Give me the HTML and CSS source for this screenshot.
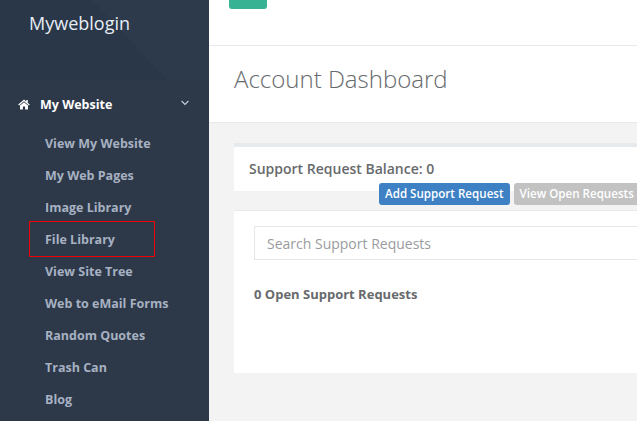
FILE: index.html
```html
<!DOCTYPE html>
<html lang="en">
<head>
<meta charset="utf-8">
<title>Account Dashboard</title>
<link rel="stylesheet" href="styles.css">
</head>
<body>
<div class="app">
  <aside class="sidebar">
    <div class="brand">
      <svg class="brand-shade" width="209" height="81" viewBox="0 0 209 81"><polygon points="0,0 92,0 168,81 0,81" fill="#2a3748"/></svg>
      <span class="brand-name">Myweblogin</span>
    </div>
    <div class="nav-head">
      <svg class="home" width="12" height="11" viewBox="0 0 12 11"><path d="M6 0.6 L0.2 5.6 L1 6.4 L6 2.2 L11 6.4 L11.8 5.6 L9.8 3.9 L9.8 1 L8.3 1 L8.3 2.6 Z M2 6.6 L2 10.6 L4.9 10.6 L4.9 7.6 L7.1 7.6 L7.1 10.6 L10 10.6 L10 6.6 L6 3.3 Z" fill="#fff"/></svg>
      <span class="nav-title">My Website</span>
      <svg class="chev" width="8" height="6" viewBox="0 0 8 6"><path d="M0.6 1 L4 4.4 L7.4 1" fill="none" stroke="#c9d0da" stroke-width="1.1"/></svg>
    </div>
    <ul class="nav-list">
      <li class="nav-item">View My Website</li>
      <li class="nav-item">My Web Pages</li>
      <li class="nav-item">Image Library</li>
      <li class="nav-item nav-marked">File Library</li>
      <li class="nav-item">View Site Tree</li>
      <li class="nav-item">Web to eMail Forms</li>
      <li class="nav-item">Random Quotes</li>
      <li class="nav-item">Trash Can</li>
      <li class="nav-item">Blog</li>
    </ul>
  </aside>
  <main class="main">
    <div class="topbar"><span class="top-btn"></span></div>
    <div class="title-bar"><h1 class="title">Account Dashboard</h1></div>
    <div class="content">
      <section class="balance">
        <h2 class="balance-text">Support Request Balance: 0</h2>
      </section>
      <div class="actions">
        <span class="btn btn-blue">Add Support Request</span>
        <span class="btn btn-grey">View Open Requests</span>
      </div>
      <section class="panel">
        <div class="search">Search Support Requests</div>
        <p class="count">0 Open Support Requests</p>
      </section>
    </div>
  </main>
</div>
</body>
</html>
```
FILE: styles.css
```css
* { box-sizing: border-box; }
html, body { margin: 0; height: 100%; overflow: hidden; }
body { font-family: "Open Sans", "Liberation Sans", sans-serif; background: #f3f3f4; }
.app { display: flex; width: 637px; height: 421px; overflow: hidden; }
.sidebar { width: 209px; flex: none; background: #2d3949; }
.brand { position: relative; height: 81px; padding: 11px 0 0 29px; background: #2c3a4b; }
.brand-shade { position: absolute; left: 0; top: 0; }
.brand-name { position: relative; display: block; font-size: 18px; font-weight: 500; line-height: 25px; color: #e6edf5; }
.nav-head { display: flex; align-items: center; height: 47px; padding: 0 20px 0 18px; }
.home { flex: none; margin-right: 10px; }
.nav-title { flex: 1; font-size: 12.5px; font-weight: 700; color: #fff; }
.chev { flex: none; margin-bottom: 4px; }
.nav-list { list-style: none; margin: 0; padding: 0; }
.nav-item { position: relative; height: 32px; padding-left: 45px; font-size: 12.5px; font-weight: 700; line-height: 32px; color: #a7b1c2; }
.nav-marked::after { content: ""; position: absolute; left: 29px; top: -3px; width: 126px; height: 36px; box-sizing: border-box; border: 1px solid #f00000; }
.main { flex: 1; min-width: 0; }
.topbar { height: 46px; background: #fff; border-bottom: 1px solid #e7eaec; }
.top-btn { display: block; width: 38px; height: 9px; margin-left: 20px; background: #37b293; border-radius: 0 0 3px 3px; }
.title-bar { height: 77px; padding-left: 25px; background: #fff; border-bottom: 1px solid #e7eaec; }
.title { margin: 0; padding-top: 16px; font-size: 24px; font-weight: 300; line-height: 33px; color: #676a6c; white-space: nowrap; }
.content { position: relative; margin-left: 25px; padding-top: 20px; }
.balance { height: 48px; padding: 13px 15px 0; background: #fff; border-top: 4px solid #e7eaec; }
.balance-text { margin: 0; font-size: 14px; font-weight: 600; line-height: 18px; color: #676a6c; white-space: nowrap; }
.actions { position: absolute; left: 145px; top: 60px; display: flex; gap: 4px; white-space: nowrap; }
.btn { height: 22px; padding: 0 6px; border-radius: 3px; font-size: 11.6px; font-weight: 600; line-height: 22px; color: #fff; }
.btn-blue { background: #3d80c4; }
.btn-grey { background: #c2c2c2; }
.panel { height: 163px; margin-top: 19px; padding: 15px 20px 0; background: #fff; border-top: 1px solid #e7eaec; }
.search { width: 400px; height: 34px; padding: 1px 0 0 12px; border: 1px solid #e5e6e7; font-size: 14px; line-height: 32px; color: #999c9e; white-space: nowrap; }
.count { margin: 26px 0 0; font-size: 13px; font-weight: 700; line-height: 17px; color: #676a6c; white-space: nowrap; }
```
